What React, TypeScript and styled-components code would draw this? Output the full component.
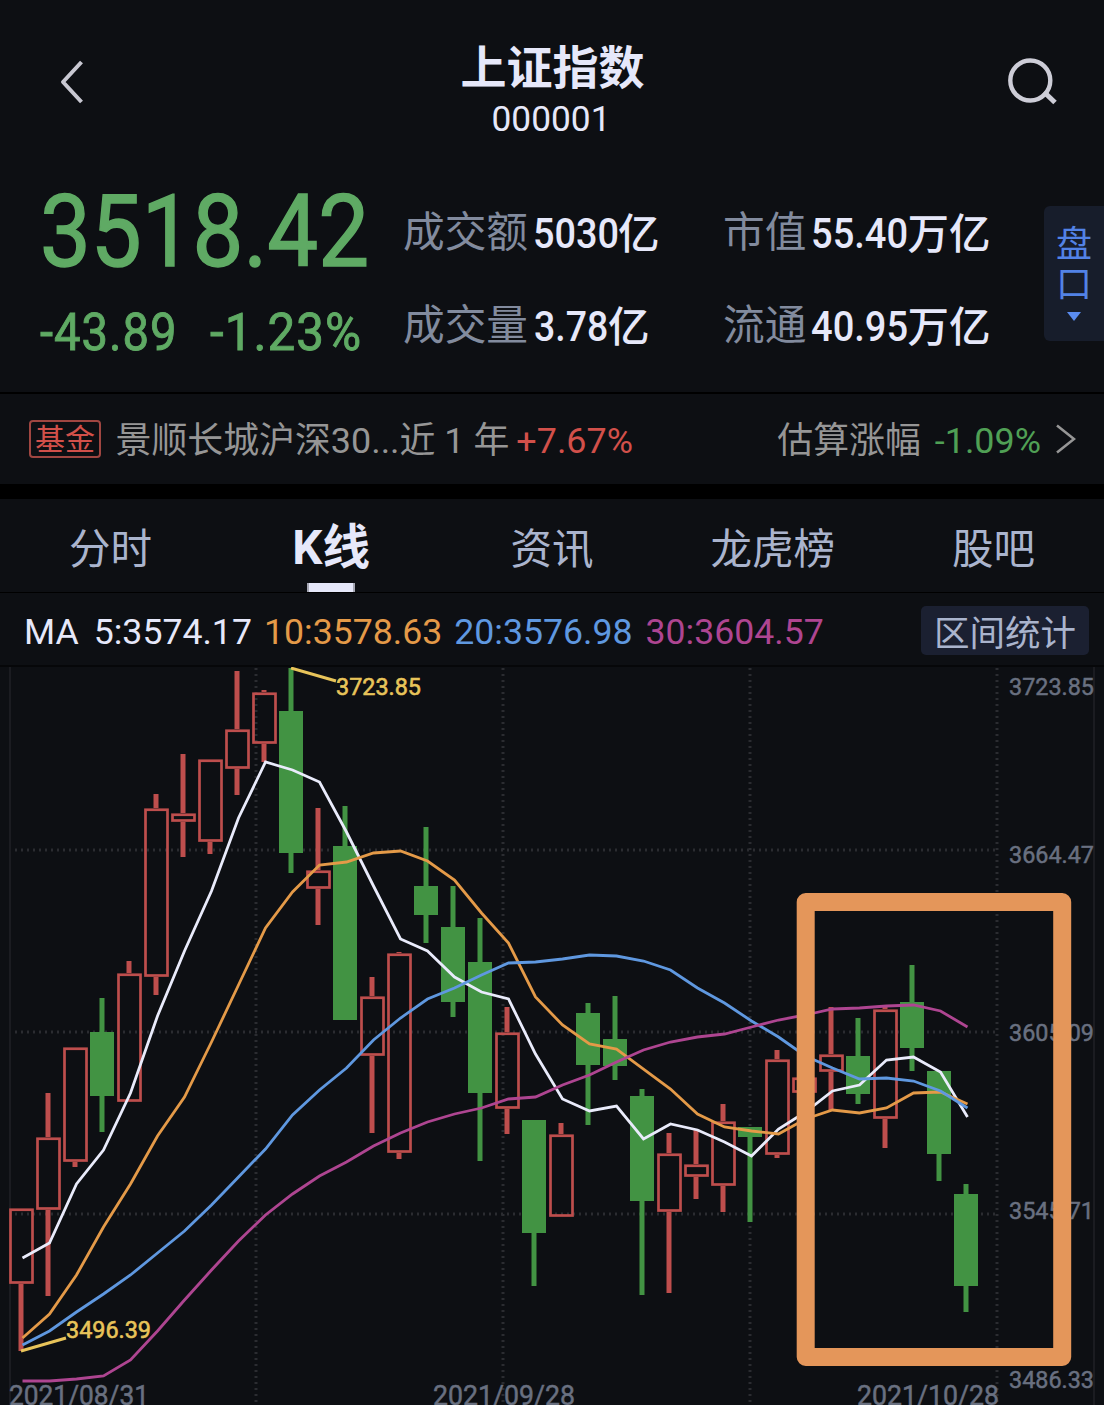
import React from 'react';
import styled, { createGlobalStyle } from 'styled-components';

const latin = "Roboto, 'Noto Sans CJK SC', sans-serif";

const GlobalStyle = createGlobalStyle`
  *, *::after { box-sizing: border-box; }
  body { margin: 0; background: #0d0f13; font-family: ${latin}; }
`;

const Page = styled.main`
  width: 1104px;
  height: 1405px;
  overflow: hidden;
  display: flex;
  flex-direction: column;
  background: #0d0f13;
  color: #e6e8fa;
  white-space: nowrap;
`;

const FitBox = styled.span<{ $w: number }>`
  display: inline-block;
  flex: none;
  width: ${p => p.$w}px;
`;
const FitInner = styled.span<{ $s: number }>`
  display: inline-block;
  transform: scaleX(${p => p.$s});
  transform-origin: left center;
`;
const Fit = ({ w, s, children }: { w: number; s: number; children: React.ReactNode }) => (
  <FitBox $w={w}><FitInner $s={s}>{children}</FitInner></FitBox>
);

const Header = styled.header`
  height: 170px;
  display: grid;
  grid-template-columns: 150px 1fr 150px;
`;
const IconButton = styled.button<{ $end?: boolean }>`
  border: 0;
  padding: ${p => (p.$end ? '0 46px 0 0' : '0 0 0 58px')};
  height: 164px;
  background: none;
  display: flex;
  align-items: center;
  justify-content: ${p => (p.$end ? 'flex-end' : 'flex-start')};
`;
const Titles = styled.div`
  display: flex;
  flex-direction: column;
  align-items: center;
  padding-top: 41px;
`;
const Title = styled.h1`
  margin: 0;
  font-size: 46px;
  line-height: 55px;
  font-weight: 700;
  padding-left: 1px;
`;
const Code = styled.div`
  font-size: 35.3px;
  line-height: 46px;
  padding-right: 2px;
`;

const Quote = styled.section`
  height: 222px;
  display: flex;
`;
const PriceBlock = styled.div`
  width: 403px;
  padding: 12px 0 0 40px;
  color: #5faa64;
`;
const Price = styled.div`
  font-size: 100px;
  line-height: 100px;
  -webkit-text-stroke: 1.5px #5faa64;
`;
const Change = styled.div`
  display: flex;
  font-size: 51px;
  line-height: 60px;
  margin-top: 21px;
  letter-spacing: 1.1px;
  -webkit-text-stroke: 0.9px #5faa64;
`;
const Stats = styled.dl<{ $w: number }>`
  width: ${p => p.$w}px;
  margin: 0;
  padding-top: 33px;
`;
const Stat = styled.div`
  display: flex;
  height: 60px;
  margin-bottom: 33px;
`;
const StatLabel = styled.dt<{ $w: number }>`
  width: ${p => p.$w}px;
  color: #828b9e;
  font-size: 41.7px;
  line-height: 59px;
`;
const StatValue = styled.dd`
  margin: 0;
  display: flex;
  font-size: 43px;
  line-height: 61px;
  font-weight: 500;
`;
const Unit = styled.span`
  font-size: 41.5px;
  line-height: 63px;
`;
const DepthTab = styled.button`
  margin: 36px 0 0 auto;
  width: 60px;
  height: 135px;
  border: 0;
  border-radius: 6px 0 0 6px;
  background: #171d2b;
  color: #5282e6;
  font: 36px / 40px 'Noto Sans CJK SC', sans-serif;
  padding: 15px 0 0;
  display: flex;
  flex-direction: column;
  align-items: center;
`;
const DepthLabel = styled.span`
  width: 36px;
  white-space: normal;
`;
const DepthArrow = styled.svg`
  margin-top: 11px;
`;

const FundBar = styled.section`
  height: 107px;
  border-top: 2px solid #000;
  border-bottom: 15px solid #000;
  padding: 0 28px 0 29px;
  display: flex;
  align-items: center;
  font-size: 35.9px;
  line-height: 50px;
  color: #969696;
`;
const Tag = styled.span`
  width: 72px;
  height: 38px;
  border: 2px solid #a04641;
  border-radius: 4px;
  color: #d2504a;
  font-size: 30px;
  line-height: 36px;
  text-align: center;
  margin-right: 14.5px;
`;
const FundText = styled.span`
  padding-top: 4px;
`;
const Rate = styled.span<{ $up?: boolean }>`
  color: ${p => (p.$up ? '#d2504a' : '#50a055')};
  margin-left: ${p => (p.$up ? 7 : 14)}px;
`;
const Estimate = styled.span`
  margin-left: auto;
  display: flex;
  align-items: center;
  gap: 15px;
`;

const Tabs = styled.nav`
  height: 94px;
  border-bottom: 1px solid #000;
  display: grid;
  grid-template-columns: repeat(5, 1fr);
`;
const Tab = styled.button<{ $on?: boolean }>`
  border: 0;
  background: none;
  padding: 0;
  display: flex;
  flex-direction: column;
  align-items: center;
  justify-content: flex-end;
  font-family: ${latin};
  font-size: ${p => (p.$on ? 47.5 : 41.5)}px;
  font-weight: ${p => (p.$on ? 700 : 400)};
  line-height: 60px;
  color: ${p => (p.$on ? '#e6e8fa' : '#aab4cd')};
  &::after {
    content: '';
    width: 48px;
    height: 9px;
    margin-top: ${p => (p.$on ? 5 : 3)}px;
    border: solid ${p => (p.$on ? '#a5a7b4' : 'transparent')};
    border-width: 0 2px;
    background: ${p => (p.$on ? '#e6e8fa' : 'transparent')};
  }
`;

const Averages = styled.section`
  height: 74px;
  border-bottom: 2px solid #060709;
  padding: 0 15px 0 24px;
  display: flex;
  align-items: center;
  font-size: 35.65px;
  line-height: 48px;
`;
const Average = styled.span<{ $c: string; $gap: number }>`
  color: ${p => p.$c};
  margin-left: ${p => p.$gap}px;
  padding-top: 6px;
`;
const RangeButton = styled.button`
  margin: 2px 0 0 auto;
  width: 168px;
  height: 49px;
  border: 0;
  padding: 0;
  border-radius: 5px;
  background: #1b2031;
  color: #aab4cd;
  font: 35.5px / 49px 'Noto Sans CJK SC', sans-serif;
`;

const ChartSvg = styled.svg`
  display: block;
  flex: none;
  text { font-family: ${latin}; }
`;

const RED = '#be4e4d';
const GREEN = '#429343';

// up/down, body top, body bottom, high, low
const candles: [number, number, number, number, number][] = [
  [1, 1208, 1284, 1208, 1351], [1, 1137, 1210, 1093, 1296], [1, 1047, 1162, 1047, 1167],
  [0, 1032, 1096, 998, 1132], [1, 973, 1102, 961, 1102], [1, 808, 977, 794, 995],
  [1, 813, 822, 754, 857], [1, 759, 842, 759, 854], [1, 729, 769, 671, 795],
  [1, 692, 744, 690, 762], [0, 711, 853, 668, 873], [1, 870, 889, 808, 925],
  [0, 846, 1020, 806, 1020], [1, 996, 1056, 977, 1133], [1, 953, 1153, 952, 1159],
  [0, 886, 915, 827, 943], [0, 927, 1002, 886, 1017], [0, 962, 1093, 918, 1161],
  [1, 1032, 1109, 1007, 1134], [0, 1120, 1233, 1120, 1286], [1, 1134, 1217, 1123, 1217],
  [0, 1013, 1065, 1003, 1125], [0, 1039, 1066, 996, 1080], [0, 1096, 1201, 1089, 1295],
  [1, 1153, 1212, 1133, 1293], [1, 1164, 1177, 1130, 1199], [1, 1121, 1186, 1104, 1212],
  [0, 1127, 1137, 1127, 1222], [1, 1059, 1155, 1050, 1158], [1, 1077, 1093, 1077, 1093],
  [1, 1054, 1072, 1007, 1110], [0, 1056, 1094, 1018, 1104], [1, 1009, 1119, 1006, 1148],
  [0, 1002, 1048, 965, 1071], [0, 1071, 1154, 1071, 1181], [0, 1194, 1286, 1184, 1312],
];

const averages: { color: string; ys: number[] }[] = [
  { color: '#e9ebfb', ys: [1258, 1243, 1184, 1150, 1093, 1016, 951, 891, 818, 762, 770, 782, 832, 886, 939, 951, 977, 992, 999, 1054, 1099, 1111, 1106, 1139, 1124, 1130, 1142, 1156, 1129, 1112, 1091, 1085, 1060, 1057, 1072, 1117] },
  { color: '#e49a48', ys: [1338, 1314, 1275, 1227, 1184, 1136, 1097, 1042, 985, 928, 892, 865, 862, 853, 851, 861, 880, 913, 943, 997, 1025, 1044, 1049, 1069, 1089, 1114, 1127, 1131, 1134, 1119, 1110, 1113, 1108, 1093, 1092, 1104] },
  { color: '#5f98e0', ys: [1345, 1331, 1312, 1294, 1275, 1253, 1231, 1205, 1177, 1149, 1115, 1090, 1068, 1040, 1018, 999, 988, 975, 963, 962, 959, 955, 956, 961, 970, 988, 1003, 1021, 1037, 1056, 1068, 1079, 1078, 1081, 1091, 1108] },
  { color: '#ae4591', ys: [1381, 1381, 1379, 1376, 1360, 1331, 1300, 1270, 1241, 1215, 1194, 1176, 1162, 1146, 1133, 1122, 1114, 1108, 1099, 1097, 1085, 1075, 1062, 1050, 1042, 1037, 1034, 1027, 1020, 1015, 1009, 1008, 1006, 1005, 1011, 1027] },
];

const Candle = ({ i, c }: { i: number; c: [number, number, number, number, number] }) => {
  const [up, top, bottom, high, low] = c;
  const x = 21 + i * 27;
  const color = up ? RED : GREEN;
  return (
    <g fill={color}>
      <rect x={x - 2.5} y={high} width={5} height={top - high} />
      <rect x={x - 2.5} y={bottom} width={5} height={low - bottom} />
      {up ? (
        <rect x={x - 10.5} y={top + 1.75} width={22} height={bottom - top - 3.25} fill="none" stroke={color} strokeWidth={2.7} />
      ) : (
        <rect x={x - 12} y={top} width={24} height={bottom - top} />
      )}
    </g>
  );
};

const scale: [string, number][] = [['3723.85', 694.5], ['3664.47', 862.5], ['3605.09', 1041], ['3545.71', 1219], ['3486.33', 1388]];
const dates: [string, number][] = [['2021/08/31', 9], ['2021/09/28', 433], ['2021/10/28', 857]];

const Chart = () => (
  <ChartSvg width="1104" height="738" viewBox="0 667 1104 738">
    <path d="M10 667V1405M1094 667V1405" stroke="#1b1c21" strokeWidth="2" />
    <g stroke="#2b2c31" strokeWidth="3" strokeDasharray="2 4">
      {[850, 1032, 1214].map(y => <path key={y} d={`M15 ${y}H997`} />)}
      {[256, 503, 750, 997].map(x => <path key={x} d={`M${x} 668V1405`} />)}
    </g>
    {candles.map((c, i) => <Candle key={i} i={i} c={c} />)}
    {averages.map(a => (
      <polyline
        key={a.color}
        fill="none"
        stroke={a.color}
        strokeWidth="2.8"
        points={a.ys.map((y, i) => `${22.5 + i * 27},${y}`).join(' ')}
      />
    ))}
    <path d="M291 668L336 681M21 1351L66 1338" stroke="#e8c45a" strokeWidth="3" />
    <g fill="#e8c45a" fontSize="24.5" stroke="#e8c45a" strokeWidth="0.6">
      <text x="336" y="694.5" textLength="85" lengthAdjust="spacingAndGlyphs">3723.85</text>
      <text x="66" y="1338" textLength="85" lengthAdjust="spacingAndGlyphs">3496.39</text>
    </g>
    <g fill="#697080" stroke="#697080" strokeWidth="0.5">
      {scale.map(([t, y]) => (
        <text key={t} x="1009" y={y} fontSize="24.5" textLength="85" lengthAdjust="spacingAndGlyphs">{t}</text>
      ))}
      {dates.map(([t, x]) => (
        <text key={t} x={x} y="1405" fontSize="28" textLength={x === 9 ? 140 : 142} lengthAdjust="spacingAndGlyphs">{t}</text>
      ))}
    </g>
    <rect x="805.7" y="902" width="256.5" height="455" fill="none" stroke="#e4965a" strokeWidth="18" strokeLinejoin="round" />
  </ChartSvg>
);

export default function App() {
  return (
    <Page>
      <GlobalStyle />
      <Header>
        <IconButton>
          <svg width="28" height="46" viewBox="58 59 28 46" fill="none" stroke="#c8c8d2" strokeWidth="4" strokeLinejoin="round">
            <path d="M81.500 62L63 82L81.500 102" />
          </svg>
        </IconButton>
        <Titles>
          <Title>上证指数</Title>
          <Code>000001</Code>
        </Titles>
        <IconButton $end>
          <svg width="52" height="50" viewBox="1006 57 52 50" fill="none" stroke="#cdcdd7" strokeWidth="4.4">
            <circle cx="1030.3" cy="80.5" r="20" />
            <path d="M1044 92L1055 102.500" strokeWidth="5" />
          </svg>
        </IconButton>
      </Header>
      <Quote>
        <PriceBlock>
          <Price><Fit w={340} s={0.905}>3518.42</Fit></Price>
          <Change>
            <Fit w={170} s={0.925}>-43.89</Fit>
            <Fit w={160} s={0.967}>-1.23%</Fit>
          </Change>
        </PriceBlock>
        <Stats $w={320}>
          <Stat><StatLabel $w={130}>成交额</StatLabel><StatValue><Fit w={85} s={0.88}>5030</Fit><Unit>亿</Unit></StatValue></Stat>
          <Stat><StatLabel $w={131}>成交量</StatLabel><StatValue><Fit w={74} s={0.87}>3.78</Fit><Unit>亿</Unit></StatValue></Stat>
        </Stats>
        <Stats $w={290}>
          <Stat><StatLabel $w={88}>市值</StatLabel><StatValue><Fit w={96.5} s={0.885}>55.40</Fit><Unit>万亿</Unit></StatValue></Stat>
          <Stat><StatLabel $w={88}>流通</StatLabel><StatValue><Fit w={96.5} s={0.885}>40.95</Fit><Unit>万亿</Unit></StatValue></Stat>
        </Stats>
        <DepthTab>
          <DepthLabel>盘口</DepthLabel>
          <DepthArrow width="14" height="9" viewBox="0 0 14 9"><path d="M0 0H14L7 9Z" fill="#5a8cf0" /></DepthArrow>
        </DepthTab>
      </Quote>
      <FundBar>
        <Tag>基金</Tag>
        <FundText>景顺长城沪深30...近 1 年<Rate $up>+7.67%</Rate></FundText>
        <Estimate>
          <FundText>估算涨幅<Rate>-1.09%</Rate></FundText>
          <svg width="20" height="30" viewBox="0 0 20 30" fill="none" stroke="#969696" strokeWidth="2.6"><path d="M1 1.500L18 15L1 28.500" /></svg>
        </Estimate>
      </FundBar>
      <Tabs>
        <Tab>分时</Tab>
        <Tab $on>K线</Tab>
        <Tab>资讯</Tab>
        <Tab>龙虎榜</Tab>
        <Tab>股吧</Tab>
      </Tabs>
      <Averages>
        <Average $c="#e6e8fa" $gap={0}>MA</Average>
        <Average $c="#e6e8fa" $gap={15}>5:3574.17</Average>
        <Average $c="#e49a48" $gap={12}>10:3578.63</Average>
        <Average $c="#5f98e0" $gap={12}>20:3576.98</Average>
        <Average $c="#ae4591" $gap={13}>30:3604.57</Average>
        <RangeButton>区间统计</RangeButton>
      </Averages>
      <Chart />
    </Page>
  );
}
